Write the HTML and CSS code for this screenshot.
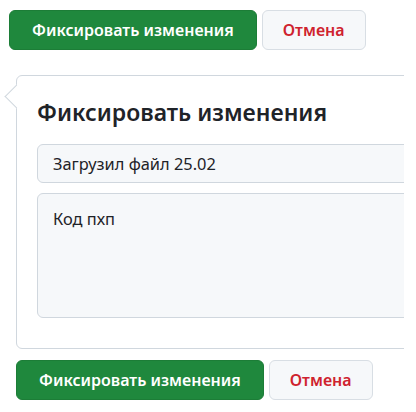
FILE: index.html
```html
<!DOCTYPE html>
<html lang="ru">
<head>
<meta charset="utf-8">
<link rel="stylesheet" href="styles.css">
</head>
<body>
<div class="page">
  <div class="actions actions-top">
    <button class="btn btn-primary">Фиксировать изменения</button>
    <button class="btn btn-cancel">Отмена</button>
  </div>
  <div class="card">
    <h2 class="card-title">Фиксировать изменения</h2>
    <div class="field">Загрузил файл 25.02</div>
    <div class="field field-area">Код пхп</div>
  </div>
  <div class="actions actions-bottom">
    <button class="btn btn-primary">Фиксировать изменения</button>
    <button class="btn btn-cancel">Отмена</button>
  </div>
</div>
</body>
</html>
```
FILE: styles.css
```css
html, body {
  margin: 0;
  padding: 0;
  background: #ffffff;
}
body {
  font-family: "Noto Sans", "Open Sans", sans-serif;
  color: #1f2328;
}
.page {
  width: 404px;
  height: 412px;
  overflow: hidden;
}
.actions {
  display: flex;
  gap: 5px;
}
.actions-top {
  padding: 10px 0 0 9px;
}
.actions-bottom {
  padding: 11px 0 0 16px;
}
.btn {
  font-family: inherit;
  font-size: 16px;
  font-weight: 600;
  height: 40px;
  border-radius: 6px;
  padding: 0 22px;
  line-height: 1;
  cursor: pointer;
  white-space: nowrap;
}
.btn-primary {
  background: #1f883d;
  color: #ffffff;
  border: 1px solid #1c7d37;
}
.btn-cancel {
  background: #f6f8fa;
  color: #cf222e;
  border: 1px solid #d8dee4;
  padding: 0 20px;
}
.card {
  position: relative;
  margin: 25px 0 0 16px;
  width: 440px;
  border: 1px solid #d0d7de;
  border-radius: 6px;
  padding: 18px 20px 30px 20px;
  box-sizing: border-box;
}
.card::before {
  content: "";
  position: absolute;
  left: -9px;
  top: 12px;
  width: 16px;
  height: 16px;
  background: #ffffff;
  border-left: 1px solid #d0d7de;
  border-bottom: 1px solid #d0d7de;
  transform: rotate(45deg);
}
.card-title {
  margin: 0 0 14px 0;
  font-size: 23px;
  font-weight: 600;
  line-height: 36px;
}
.field {
  background: #f6f8fa;
  border: 1px solid #d0d7de;
  border-radius: 6px;
  height: 39px;
  box-sizing: border-box;
  padding: 0 15px;
  font-size: 16.4px;
  line-height: 37px;
}
.field-area {
  margin-top: 10px;
  height: 125px;
  padding-top: 6px;
}
```
